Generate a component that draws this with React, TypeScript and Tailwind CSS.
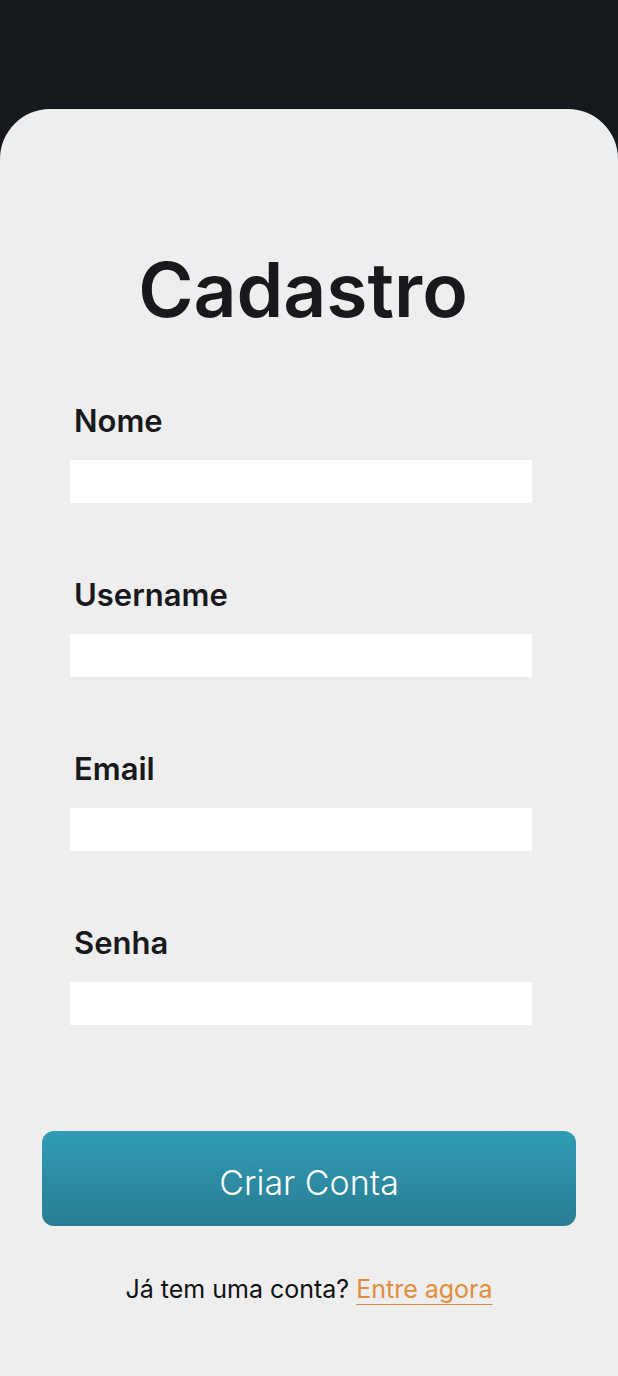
import React from 'react'

// ── Field ─────────────────────────────────────────────────────────────────────

function Field({ label, type = 'text' }: { label: string; type?: string }) {
  return (
    <div className="flex flex-col">
      <label className="ml-[4px] text-[31px] leading-[30px] font-semibold text-[#17191d]">{label}</label>
      <input type={type} className="mt-[24px] h-[43px] w-full bg-white outline-none px-3 text-[20px]" />
    </div>
  )
}

// ── Page ──────────────────────────────────────────────────────────────────────

export default function App() {
  return (
    <div
      className="min-h-[1376px] w-[618px] bg-[#15181d] flex flex-col"
      style={{ fontFamily: 'Inter, "Noto Sans", sans-serif' }}
    >
      <div className="h-[109px]" />
      <div className="flex-1 rounded-t-[50px] bg-[#eeeeee] flex flex-col pt-[143px]">
        <div className="ml-[70px] w-[462px] flex flex-col">
          <h1 className="text-center text-[75px] leading-none font-semibold text-[#17191d] ml-[4px]">Cadastro</h1>

          <div className="mt-[79px] flex flex-col gap-[77px]">
            <Field label="Nome" />
            <Field label="Username" />
            <Field label="Email" type="email" />
            <Field label="Senha" type="password" />
          </div>
        </div>

        <button className="mt-[106px] ml-[42px] w-[534px] h-[95px] rounded-[12px] bg-gradient-to-b from-[#309cb6] to-[#297d92] text-white text-[34px] leading-none font-light pt-[8px]">
          Criar Conta
        </button>

        <p className="mt-[51px] text-center text-[25px] leading-none text-[#111111]">
          Já tem uma conta?{' '}
          <a href="#" className="text-[#e08d3c] underline underline-offset-[6px] decoration-1 decoration-[#e08d3c]">Entre agora</a>
        </p>
      </div>
    </div>
  )
}
